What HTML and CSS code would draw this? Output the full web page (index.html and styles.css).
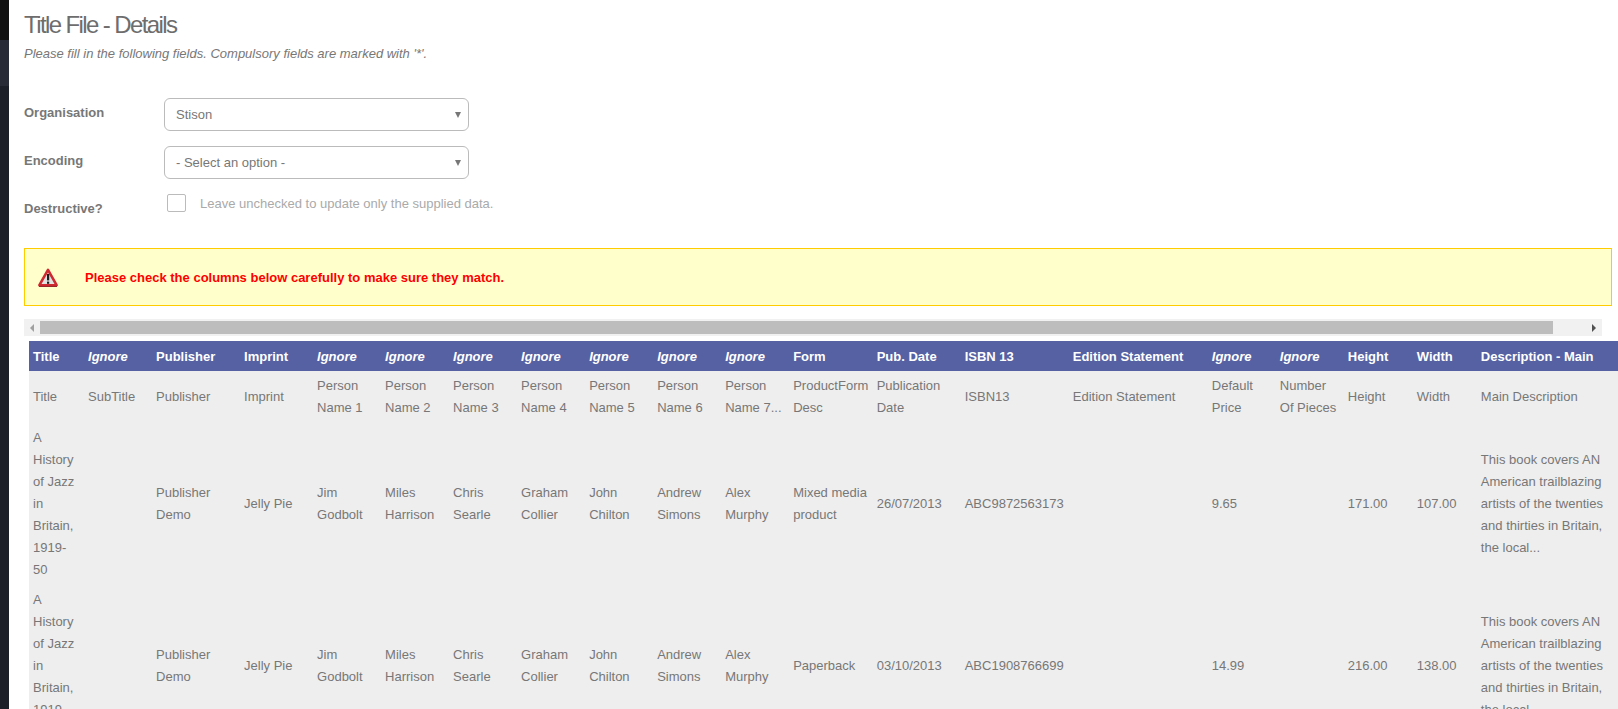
FILE: index.html
```html
<!DOCTYPE html>
<html lang="en">
<head>
<meta charset="utf-8">
<title>Title File - Details</title>
<link rel="stylesheet" href="styles.css">
</head>
<body>
<div class="shell">
  <aside class="rail"><div class="rail-a"></div><div class="rail-b"></div><div class="rail-c"></div></aside>
  <main class="main">
    <h1 class="title">Title File - Details</h1>
    <p class="intro">Please fill in the following fields. Compulsory fields are marked with '*'.</p>
    <div class="form">
      <div class="row"><label class="lbl">Organisation</label><div class="select"><span>Stison</span><i class="caret"></i></div></div>
      <div class="row"><label class="lbl">Encoding</label><div class="select"><span>- Select an option -</span><i class="caret"></i></div></div>
      <div class="row-check"><label class="lbl lbl-check">Destructive?</label><span class="check"></span><span class="hint">Leave unchecked to update only the supplied data.</span></div>
    </div>
    <div class="alert">
      <svg class="warn" width="20" height="19" viewBox="0 0 20 19"><path d="M10 1.8 L18.6 17.2 H1.4 Z" fill="#e2e2e2" stroke="#cf2a32" stroke-width="2.6" stroke-linejoin="round"/><path d="M1 18.4 H19" fill="none" stroke="#8e1b20" stroke-width="1"/><rect x="9" y="6" width="2.2" height="6.4" fill="#1c1c1c"/><rect x="9" y="13.6" width="2.2" height="2.2" fill="#1c1c1c"/></svg>
      <span>Please check the columns below carefully to make sure they match.</span>
    </div>
    <div class="scrollbar"><i class="arrow-l"></i><div class="thumb"></div><i class="arrow-r"></i></div>
    <div class="table-wrap">
    <table class="grid">
      <colgroup><col class="c1"><col class="c2"><col class="c3"><col class="c4"><col class="c5"><col class="c5"><col class="c5"><col class="c5"><col class="c5"><col class="c5"><col class="c5"><col class="c6"><col class="c7"><col class="c8"><col class="c9"><col class="c10"><col class="c11"><col class="c12"><col class="c13"><col class="c14"></colgroup>
      <thead><tr><th>Title</th><th class="ign">Ignore</th><th>Publisher</th><th>Imprint</th><th class="ign">Ignore</th><th class="ign">Ignore</th><th class="ign">Ignore</th><th class="ign">Ignore</th><th class="ign">Ignore</th><th class="ign">Ignore</th><th class="ign">Ignore</th><th>Form</th><th>Pub. Date</th><th>ISBN 13</th><th>Edition Statement</th><th class="ign">Ignore</th><th class="ign">Ignore</th><th>Height</th><th>Width</th><th>Description - Main</th></tr></thead>
      <tbody>
        <tr><td>Title</td><td>SubTitle</td><td>Publisher</td><td>Imprint</td><td>Person Name 1</td><td>Person Name 2</td><td>Person Name 3</td><td>Person Name 4</td><td>Person Name 5</td><td>Person Name 6</td><td>Person Name 7...</td><td>ProductForm Desc</td><td>Publication Date</td><td>ISBN13</td><td>Edition Statement</td><td>Default Price</td><td>Number Of Pieces</td><td>Height</td><td>Width</td><td>Main Description</td></tr>
        <tr><td>A History of Jazz in Britain, 1919-50</td><td></td><td>Publisher Demo</td><td>Jelly Pie</td><td>Jim Godbolt</td><td>Miles Harrison</td><td>Chris Searle</td><td>Graham Collier</td><td>John Chilton</td><td>Andrew Simons</td><td>Alex Murphy</td><td>Mixed media product</td><td>26/07/2013</td><td>ABC9872563173</td><td></td><td>9.65</td><td></td><td>171.00</td><td>107.00</td><td>This book covers AN American trailblazing artists of the twenties and thirties in Britain, the local...</td></tr>
        <tr><td>A History of Jazz in Britain, 1919-50</td><td></td><td>Publisher Demo</td><td>Jelly Pie</td><td>Jim Godbolt</td><td>Miles Harrison</td><td>Chris Searle</td><td>Graham Collier</td><td>John Chilton</td><td>Andrew Simons</td><td>Alex Murphy</td><td>Paperback</td><td>03/10/2013</td><td>ABC1908766699</td><td></td><td>14.99</td><td></td><td>216.00</td><td>138.00</td><td>This book covers AN American trailblazing artists of the twenties and thirties in Britain, the local...</td></tr>
      </tbody>
    </table>
    </div>
  </main>
</div>
</body>
</html>
```
FILE: styles.css
```css
html, body { margin: 0; padding: 0; height: 709px; overflow: hidden; background: #fff; }
body { font-family: "Liberation Sans", Arial, sans-serif; font-size: 13px; color: #777; }
.shell { display: flex; height: 709px; overflow: hidden; }
.rail { width: 9px; flex: none; display: flex; flex-direction: column; background: #1b1f27; }
.rail-a { height: 40px; background: #111; }
.rail-b { height: 46px; background: #262b36; }
.rail-c { flex: 1; }
.main { flex: 1; min-width: 0; padding: 0 0 0 15px; }
.title { margin: 0; padding-top: 11px; font-size: 24px; font-weight: 400; line-height: 28px; color: #6d6d6d; letter-spacing: -1.6px; }
.intro { margin: 5px 0 0; font-size: 13px; line-height: 20px; font-style: italic; color: #777; }
.form { margin-top: 34px; }
.row { display: flex; align-items: center; height: 33px; margin-bottom: 15px; }
.lbl { width: 140px; flex: none; font-weight: 700; font-size: 13px; color: #777; position: relative; top: -2px; }
.select { width: 305px; height: 33px; box-sizing: border-box; border: 1px solid #bbb; border-radius: 6px; display: flex; align-items: center; justify-content: space-between; padding: 0 7px 0 11px; color: #777; }
.caret { width: 0; height: 0; border-left: 3px solid transparent; border-right: 3px solid transparent; border-top: 6px solid #777; }
.row-check { display: flex; align-items: flex-start; height: 20px; }
.lbl-check { top: 7px; }
.check { width: 19px; height: 18px; box-sizing: border-box; border: 1px solid #bbb; border-radius: 2px; margin-left: 3px; }
.hint { margin-left: 14px; line-height: 20px; color: #aaa; }
.alert { margin-top: 34px; width: 1588px; height: 58px; box-sizing: border-box; border: 1px solid #fc0; background: #ffc; display: flex; align-items: center; padding-left: 13px; color: #f00; font-weight: 700; font-size: 13px; }
.warn { margin-right: 27px; }
.scrollbar { margin-top: 13px; width: 1578px; height: 17px; background: #f1f1f1; display: flex; align-items: center; padding: 0 6px; box-sizing: border-box; }
.thumb { width: 1513px; height: 13px; margin-left: 6px; background: #bdbdbd; }
.arrow-l { width: 0; height: 0; border-top: 4px solid transparent; border-bottom: 4px solid transparent; border-right: 4px solid #a0a0a0; }
.arrow-r { width: 0; height: 0; border-top: 4px solid transparent; border-bottom: 4px solid transparent; border-left: 4px solid #505050; margin-left: auto; }
.table-wrap { margin-top: 5px; margin-left: 5px; overflow: hidden; }
.grid { border-collapse: collapse; table-layout: fixed; width: 1589px; }
.c1 { width: 55px; } .c2 { width: 68px; } .c3 { width: 88px; } .c4 { width: 73px; } .c5 { width: 68px; } .c6 { width: 83.5px; } .c7 { width: 88px; } .c8 { width: 108px; } .c9 { width: 139px; } .c10 { width: 68px; } .c11 { width: 68px; } .c12 { width: 69px; } .c13 { width: 64px; } .c14 { width: 141px; }
.grid th { background: #5561a2; color: #fff; text-align: left; font-size: 13px; font-weight: 700; height: 30px; padding: 0 4px; white-space: nowrap; }
.grid th.ign { font-style: italic; }
.grid td { background: #eee; color: #777; padding: 4px; line-height: 22px; vertical-align: middle; }
```
